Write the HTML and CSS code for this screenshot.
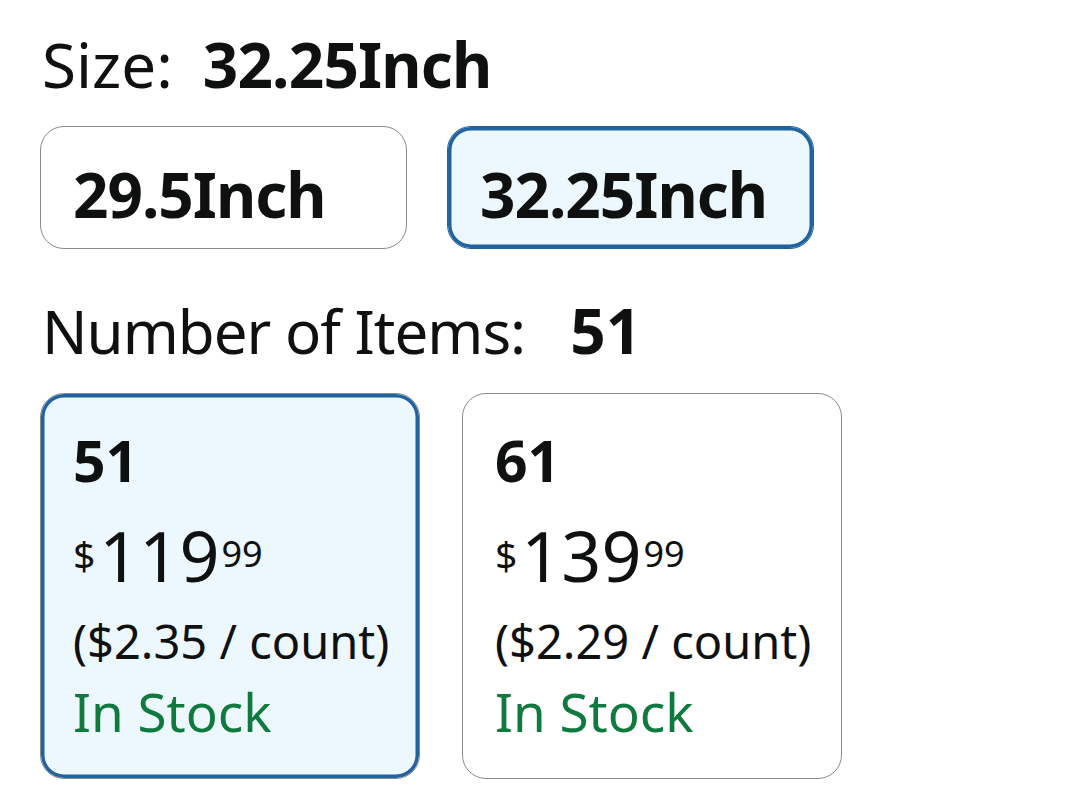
FILE: index.html
```html
<!DOCTYPE html>
<html lang="en">
<head>
    <meta charset="UTF-8">
    <meta name="viewport" content="width=device-width, initial-scale=1.0">
    <title>Variations</title>
    <link rel="stylesheet" href="styles.css">
</head>
<body>
    <div class="variations">
        <div class="variation-label">Size:<span class="variation-value">32.25Inch</span></div>
        <div class="size-options">
            <div class="size-option">29.5Inch</div>
            <div class="size-option selected">32.25Inch</div>
        </div>

        <div class="variation-label items-label">Number of Items:<span class="variation-value">51</span></div>
        <div class="item-options">
            <div class="item-option selected">
                <div class="item-count">51</div>
                <div class="price">
                    <span class="price-symbol">$</span>
                    <span class="price-whole">119</span>
                    <span class="price-fraction">99</span>
                </div>
                <div class="unit-price">($2.35 / count)</div>
                <div class="stock">In Stock</div>
            </div>
            <div class="item-option">
                <div class="item-count">61</div>
                <div class="price">
                    <span class="price-symbol">$</span>
                    <span class="price-whole">139</span>
                    <span class="price-fraction">99</span>
                </div>
                <div class="unit-price">($2.29 / count)</div>
                <div class="stock">In Stock</div>
            </div>
        </div>
    </div>
</body>
</html>
```

FILE: styles.css
```css
body {
    margin: 0;
    font-family: 'Noto Sans', sans-serif;
    background-color: #fff;
    color: #0f1111;
}

.variations {
    padding: 33px 0 0 40px;
}

.variation-label {
    font-size: 62px;
    line-height: 1;
    margin-left: 2px;
}

.variation-value {
    font-weight: bold;
    letter-spacing: -0.8px;
    margin-left: 30px;
}

.size-options {
    display: flex;
    gap: 40px;
    margin-top: 31px;
}

.size-option {
    box-sizing: border-box;
    width: 367px;
    height: 123px;
    padding: 13px 0 0 32px;
    display: flex;
    align-items: center;
    border: 1.5px solid #878b8b;
    border-radius: 24px;
    font-size: 62px;
    font-weight: bold;
    letter-spacing: -1px;
    line-height: 1;
}

.selected {
    border-color: #2162a1;
    background-color: #edf7fe;
    box-shadow: inset 0 0 0 3.5px #2162a1;
}

.items-label {
    margin-top: 50px;
    font-size: 60px;
    letter-spacing: -1px;
}

.items-label .variation-value {
    font-size: 62px;
    letter-spacing: 0;
    margin-left: 45px;
}

.item-options {
    display: flex;
    gap: 42px;
    margin-top: 32px;
}

.item-option {
    box-sizing: border-box;
    width: 380px;
    height: 386px;
    padding: 38px 0 0 32px;
    border: 1.5px solid #878b8b;
    border-radius: 24px;
}

.item-count {
    font-size: 57px;
    font-weight: bold;
    line-height: 1;
}

.price {
    display: flex;
    align-items: flex-start;
    margin-top: 31px;
    line-height: 1;
}

.price-symbol {
    font-size: 39px;
    margin-top: 15px;
}

.price-whole {
    font-size: 70px;
    margin-left: 4px;
}

.price-fraction {
    font-size: 36px;
    margin-top: 16px;
    margin-left: 2px;
}

.unit-price {
    font-size: 47px;
    line-height: 1;
    margin-top: 28px;
}

.stock {
    font-size: 53px;
    line-height: 1;
    margin-top: 20px;
    color: #0f7a3e;
}
```
